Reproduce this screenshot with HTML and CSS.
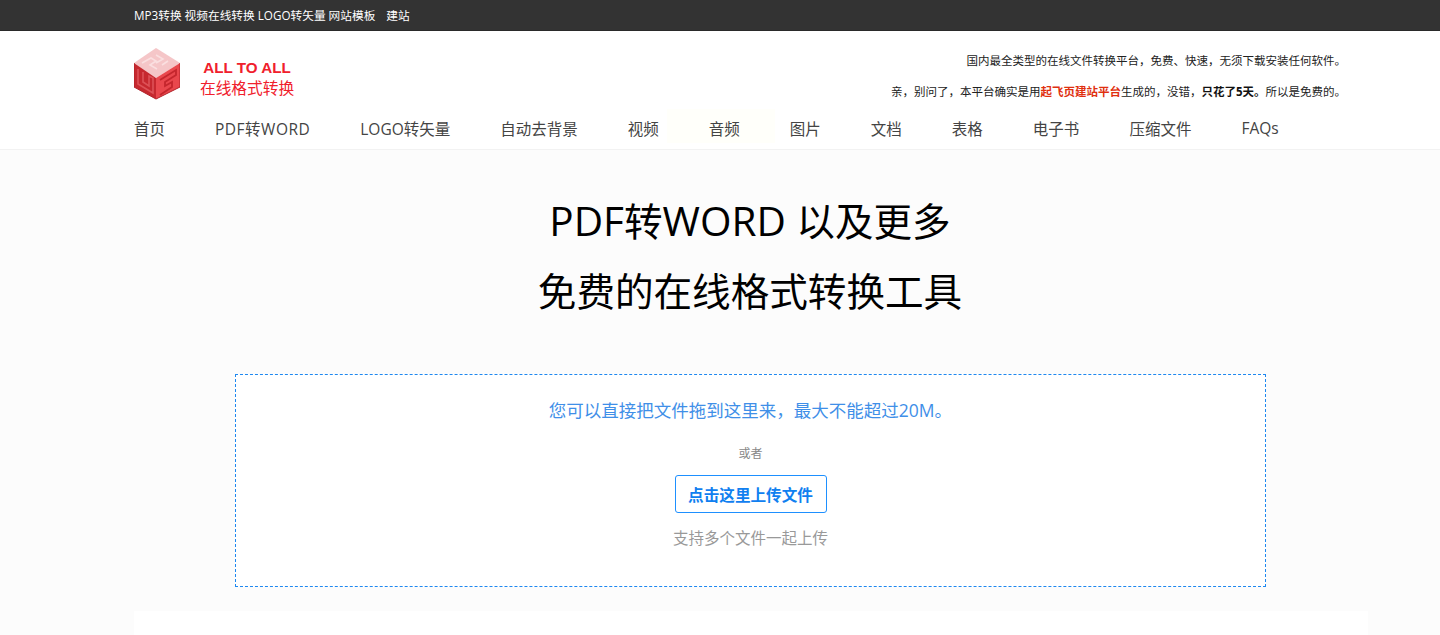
FILE: index.html
```html
<!DOCTYPE html>
<html lang="zh-CN">
<head>
<meta charset="utf-8">
<title>ALL TO ALL 在线格式转换</title>
<link rel="stylesheet" href="styles.css">
</head>
<body>
<div class="topbar">
  <div class="wrap topbar-links">
    <a>MP3转换</a><a>视频在线转换</a><a>LOGO转矢量</a><a>网站模板</a><a class="last">建站</a>
  </div>
</div>
<header class="header">
  <div class="wrap brand-row">
    <div class="brand">
      <svg class="logo" viewBox="0 0 46 52" width="46" height="52" aria-hidden="true">
        <polygon points="22,0 46,15 22,30 0,15" fill="#f5c6c8"/>
        <polygon points="0,15 22,30 22,51 0,39" fill="#c6282f"/>
        <polygon points="46,15 22,30 22,51 46,39" fill="#e9474d"/>
        <path d="M8 15l9-5 5 3-6 4 7 4M22 7l7 4-7 4M28 17l6-4" fill="none" stroke="#fadfe0" stroke-width="1.6"/>
        <path d="M4 21v15l15 9V30l-4-2v10l-6-4V24" fill="none" stroke="#dd5157" stroke-width="1.6"/>
        <path d="M26 32l16-10v5l-11 7v4l7-4v5l-12 8" fill="none" stroke="#c4262d" stroke-width="1.8"/>
        <path d="M0 15v24l22 12 24-12V15" fill="none" stroke="#b0222a" stroke-width="1"/>
      </svg>
      <div class="brand-text">
        <div class="brand-en">ALL TO ALL</div>
        <div class="brand-cn">在线格式转换</div>
      </div>
    </div>
    <div class="slogan">
      <p>国内最全类型的在线文件转换平台，免费、快速，无须下载安装任何软件。</p>
      <p>亲，别问了，本平台确实是用<a class="slogan-link">起飞页建站平台</a>生成的，没错，<b>只花了5天。</b>所以是免费的。</p>
    </div>
  </div>
  <nav class="wrap nav">
    <a>首页</a><a class="nav-wide">PDF转WORD</a><a>LOGO转矢量</a><a>自动去背景</a><a>视频</a><a class="nav-glow"><span class="nav-glow-text">音频</span></a><a>图片</a><a>文档</a><a>表格</a><a>电子书</a><a>压缩文件</a><a>FAQs</a>
  </nav>
</header>
<main class="main">
  <h1 class="title">
    <span class="title-line"><span class="title-latin">PDF</span>转<span class="title-latin">WORD </span>以及更多</span>
    <span class="title-line">免费的在线格式转换工具</span>
  </h1>
  <section class="drop">
    <p class="drop-hint">您可以直接把文件拖到这里来，最大不能超过20M。</p>
    <p class="drop-or">或者</p>
    <button class="upload" type="button">点击这里上传文件</button>
    <p class="drop-multi">支持多个文件一起上传</p>
  </section>
  <div class="wrap panel"></div>
</main>
</body>
</html>
```
FILE: styles.css
```css
* { box-sizing: border-box; }
html, body { margin: 0; height: 635px; overflow: hidden; }
body {
  background: #fcfcfc;
  color: #333;
  font-family: "Open Sans", "Noto Sans CJK SC", sans-serif;
}
p { margin: 0; }
.wrap { margin-left: 134px; width: 1234px; }

.topbar { height: 31px; background: #333; border-bottom: 1px solid #2a2a2a; }
.topbar-links { display: flex; gap: 3px; align-items: center; height: 29px; font-size: 11.7px; color: #fff; }
.topbar-links .last { margin-left: 8px; }

.header { height: 119px; background: #fff; border-bottom: 1px solid #f2f2f2; }
.brand-row { display: flex; justify-content: space-between; height: 77px; }
.brand { display: flex; align-items: flex-start; }
.logo { margin-top: 17px; flex: none; }
.brand-text { margin: 27px 0 0 20px; width: 94px; text-align: center; color: #f0202c; font-size: 15.7px; line-height: 20px; white-space: nowrap; }
.brand-en { font-family: "Liberation Sans", sans-serif; font-size: 15.2px; font-weight: 700; }
.slogan { width: 600px; padding-top: 14px; text-align: right; font-size: 11.5px; line-height: 31px; color: #222; margin-right: 22px; }
.slogan p { height: 31px; }
.slogan-link { color: #e0300f; font-weight: 700; }
.slogan b { color: #111; }

.nav { display: flex; gap: 50px; align-items: center; height: 40px; font-size: 15.5px; color: #444; }
.nav-wide { letter-spacing: .5px; }
.nav-glow { position: relative; }
.nav-glow-text { position: relative; }
.nav-glow::before { content: ""; position: absolute; left: -42px; top: -8px; width: 108px; height: 34px; background: #fffffa; }

.title { margin: 36px 0 0; text-align: center; font-weight: 400; font-size: 38.6px; color: #000; padding-left: 60px; }
.title-line { display: block; height: 70px; line-height: 70px; }
.title-latin { font-size: 40.5px; }
.drop {
  margin: 48px 0 0 235px;
  width: 1031px;
  height: 213px;
  background: #fff;
  border: 1px dashed #1e88f0;
  text-align: center;
  display: flex;
  flex-direction: column;
  align-items: center;
}
.drop-hint { margin-top: 22px; font-size: 17.5px; line-height: 26px; color: #3f8fe8; }
.drop-or { margin-top: 23px; font-size: 12px; line-height: 16px; color: #888; }
.upload {
  margin-top: 13px;
  width: 152px;
  height: 38px;
  background: #fff;
  border: 1px solid #1e90ff;
  border-radius: 3px;
  color: #1080f0;
  font: 700 15.6px "Noto Sans CJK SC", sans-serif;
}
.drop-multi { margin-top: 13px; font-size: 15.5px; line-height: 24px; color: #999; }
.panel { margin-top: 24px; height: 30px; background: #fff; }
```
